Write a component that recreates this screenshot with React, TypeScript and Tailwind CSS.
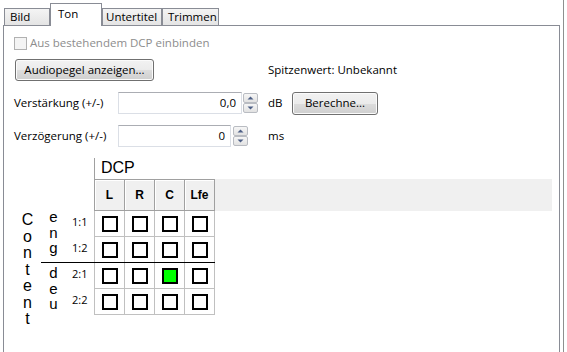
import React from 'react'

const ui = "font-['Segoe_UI','Open_Sans',sans-serif] text-[11.5px] text-black"
const arial = "font-['Liberation_Sans',Arial,sans-serif]"

function Tab({ label, active, w, pad }: { label: string; active?: boolean; w: string; pad: string }) {
  if (active) {
    return (
      <div className={`relative z-10 -mb-px h-[23px] border border-b-0 border-[#898c95] bg-white leading-[19px] ${w} ${pad}`}>
        {label}
      </div>
    )
  }
  return (
    <div
      className={`h-[17px] border border-b-0 border-[#898c95] bg-[linear-gradient(to_bottom,#f4f4f4,#e4e4e4)] leading-[16px] ${w} ${pad}`}
    >
      {label}
    </div>
  )
}

function Button({ children, className }: { children: React.ReactNode; className: string }) {
  return (
    <div
      className={`flex items-center justify-center rounded-[3px] border border-[#707070] bg-[linear-gradient(to_bottom,#f2f2f2_0%,#ebebeb_50%,#dddddd_50%,#cfcfcf_100%)] shadow-[inset_0_0_0_1px_#fbfbfb] ${className}`}
    >
      {children}
    </div>
  )
}

function Arrow({ up }: { up?: boolean }) {
  return (
    <svg width="7" height="4" viewBox="0 0 7 4">
      {up ? <polygon points="0.5,3.5 3.5,0.5 6.5,3.5" fill="#4d5f85" /> : <polygon points="0.5,0.5 3.5,3.5 6.5,0.5" fill="#4d5f85" />}
    </svg>
  )
}

function Spin() {
  return (
    <div className="flex h-[22px] w-[15px] flex-col justify-between py-px">
      <div className="flex h-[10px] items-center justify-center rounded-[2px] border border-[#b9bcc2] bg-[linear-gradient(to_bottom,#f6f6f6,#e2e2e2)]">
        <Arrow up />
      </div>
      <div className="flex h-[10px] items-center justify-center rounded-[2px] border border-[#b9bcc2] bg-[linear-gradient(to_bottom,#f6f6f6,#e2e2e2)]">
        <Arrow />
      </div>
    </div>
  )
}

function Field({ value, w }: { value: string; w: string }) {
  return (
    <div
      className={`flex h-[22px] items-center justify-end border border-[#dbdfe6] border-t-[#abadb3] bg-white pr-[5px] ${w}`}
    >
      {value}
    </div>
  )
}

function Box({ on }: { on?: boolean }) {
  return <div className={`h-[16px] w-[16px] border-2 border-black ${on ? 'bg-[#00ff00]' : 'bg-white'}`} />
}

function Cells({ row, last }: { row: number; last?: boolean }) {
  return (
    <div className={`flex h-full ${last ? '' : 'border-b border-[#c0c0c0]'}`}>
      {[0, 1, 2, 3].map(c => (
        <div
          key={c}
          className={`flex h-full items-center justify-center border-r border-[#c0c0c0] ${c === 0 ? 'w-[31px] border-l' : 'w-[30px]'}`}
        >
          <Box on={row === 2 && c === 2} />
        </div>
      ))}
    </div>
  )
}

function Row({ label, row, noBorder }: { label: string; row: number; noBorder?: boolean }) {
  return (
    <div className={`flex ${noBorder ? 'h-[25px]' : 'h-[26px]'}`}>
      <div className="w-[28px] pl-[6px] pt-[3px] text-[11px] leading-[16px]">{label}</div>
      <Cells row={row} last={noBorder} />
    </div>
  )
}

function Matrix() {
  return (
    <div className="mt-[11px]">
      <div className="flex h-[21px]">
        <div className="w-[80px]" />
        <div className={`border-l border-[#a0a0a0] pl-[6px] text-[16px] leading-[20px] ${arial}`}>DCP</div>
      </div>
      <div className="flex h-[32px]">
        <div className="w-[80px]" />
        <div className="flex w-[458px] bg-[#f0f0f0]">
          {['L', 'R', 'C', 'Lfe'].map((h, i) => (
            <div
              key={h}
              className={`flex h-full items-center justify-center border-y border-r border-[#a0a0a0] shadow-[inset_1px_1px_0_#ffffff] text-[12px] font-bold ${arial} ${i === 0 ? 'w-[31px] border-l' : 'w-[30px]'}`}
            >
              {h}
            </div>
          ))}
        </div>
      </div>
      <div className="flex items-start">
        <div className={`flex w-[27px] flex-col items-center pt-[1px] text-[16px] leading-[16.5px] ${arial}`}>
          {'Content'.split('').map((ch, i) => (
            <span key={i}>{ch}</span>
          ))}
        </div>
        <div className="flex flex-col">
          <div className="flex h-[51px]">
            <div className={`-mt-[2px] flex w-[25px] flex-col items-center text-[15px] leading-[15.5px] ${arial}`}>
              <span>e</span>
              <span>n</span>
              <span>g</span>
            </div>
            <div className="flex flex-col">
              <Row label="1:1" row={0} />
              <Row label="1:2" row={1} noBorder />
            </div>
          </div>
          <div className="flex border-t border-black">
            <div className={`flex w-[25px] flex-col items-center pt-[2px] text-[15px] leading-[15.5px] ${arial}`}>
              <span>d</span>
              <span>e</span>
              <span>u</span>
            </div>
            <div className="flex flex-col">
              <Row label="2:1" row={2} />
              <Row label="2:2" row={3} />
            </div>
          </div>
        </div>
      </div>
    </div>
  )
}

export default function App() {
  return (
    <div className={`h-[352px] w-[567px] overflow-hidden bg-white ${ui}`}>
      <div className="flex h-full w-[564px] flex-col border-r border-[#8e8f8f]">
        <div className="mx-[3px] flex h-full flex-col">
          <div className="flex h-[25px] items-end pl-[1px]">
            <Tab label="Bild" w="w-[46px]" pad="pl-[5px]" />
            <Tab label="Ton" active w="w-[52px]" pad="pl-[7px]" />
            <Tab label="Untertitel" w="w-[60px]" pad="pl-[3px]" />
            <Tab label="Trimmen" w="w-[57px]" pad="pl-[5px]" />
          </div>
          <div className="flex-1 border-x border-t border-[#898c95] bg-white pl-[10px]">
            <div className="mt-[9px] flex h-[16px] items-center">
              <div className="h-[13px] w-[13px] border border-[#b1b1b1] bg-[#f4f4f4]" />
              <span className="ml-[3px] text-[#8d8d8d]">Aus bestehendem DCP einbinden</span>
            </div>
            <div className="mt-[8px] flex h-[22px] items-center">
              <Button className="ml-px h-[22px] w-[139px]">Audiopegel anzeigen...</Button>
              <span className="ml-[114px]">Spitzenwert: Unbekannt</span>
            </div>
            <div className="mt-[11px] flex h-[22px] items-center">
              <span className="w-[104px]">Verstärkung (+/-)</span>
              <Field value="0,0" w="w-[124px]" />
              <div className="ml-px">
                <Spin />
              </div>
              <span className="ml-[10px] w-[24px]">dB</span>
              <Button className="h-[23px] w-[86px]">Berechne...</Button>
            </div>
            <div className="mt-[11px] flex h-[22px] items-center">
              <span className="w-[104px]">Verzögerung (+/-)</span>
              <Field value="0" w="w-[113px]" />
              <div className="ml-[2px]">
                <Spin />
              </div>
              <span className="ml-[20px]">ms</span>
            </div>
            <Matrix />
          </div>
        </div>
      </div>
    </div>
  )
}
